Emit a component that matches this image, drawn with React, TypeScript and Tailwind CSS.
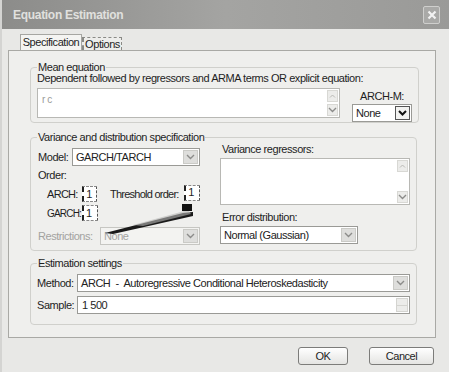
import React from 'react';

const Chevron = ({ dark = false }: { dark?: boolean }) => (
  <svg width="9" height="6" viewBox="0 0 9 6">
    <path d="M1 1l3.5 3.5L8 1" fill="none" stroke={dark ? '#111' : '#8c8c8a'} strokeWidth={dark ? 2 : 1.4} />
  </svg>
);

const Select = ({ value, className = '', disabled = false, dark = false }: { value: string; className?: string; disabled?: boolean; dark?: boolean }) => (
  <div
    className={`flex items-center h-[18px] border ${
      disabled ? 'border-[#c6c6c2] bg-[#f3f3f1] text-[#a4a4a2]' : 'border-[#9a9a96] bg-white text-[#222]'
    } ${className}`}
  >
    <span className="flex-1 pl-[3px] whitespace-pre overflow-hidden leading-[16px]">{value}</span>
    <span
      className={`w-[15px] h-[14px] mr-[1px] flex items-center justify-center ${
        dark ? 'bg-[#f2f2f0] border border-[#555]' : 'bg-[#dededc] border border-[#cacac6]'
      }`}
    >
      <Chevron dark={dark} />
    </span>
  </div>
);

const ScrollBar = () => (
  <div className="w-[11px] h-full flex flex-col justify-between py-[1px] mr-[1px]">
    <div className="h-[12px] bg-[#ececea] border border-[#d8d8d4] flex items-center justify-center">
      <svg width="7" height="4" viewBox="0 0 7 4"><path d="M1 3.5l2.5-2.5L6 3.5" fill="none" stroke="#b8b8b4" /></svg>
    </div>
    <div className="h-[12px] bg-[#ececea] border border-[#d8d8d4] flex items-center justify-center">
      <Chevron />
    </div>
  </div>
);

const Box = ({ className = '' }: { className?: string }) => (
  <div className={`h-[16px] bg-white border-l-2 border-l-[#222] border-y border-y-[#888] border-r border-r-[#555] border-dashed flex items-center pl-[2px] ${className}`}>
    1
  </div>
);

export default function App() {
  return (
    <div className="w-[449px] h-[379px] bg-white overflow-hidden relative text-[11px] tracking-[-0.45px] text-[#1e1e1e] font-['Liberation_Sans',Arial,sans-serif]">
      <div className="h-[372px] bg-[#e8e8e6] border-l-2 border-[#d4d4d2] flex flex-col">
        {/* title bar */}
        <div className="h-[29px] flex items-center justify-between pl-[11px] pr-[9px] bg-gradient-to-r from-[#8c8c8a] via-[#a4a4a2] to-[#9a9a98]">
          <span className="text-[12px] font-bold text-[#e0e0de] tracking-[-0.3px]">Equation Estimation</span>
          <div className="w-[17px] h-[18px] rounded-[2px] border border-[#cfcfcd] bg-[#a9a9a7] flex items-center justify-center">
            <svg width="10" height="10" viewBox="0 0 10 10">
              <path d="M1.5 1.5l7 7M8.5 1.5l-7 7" stroke="#f2f2f2" strokeWidth="2.2" />
            </svg>
          </div>
        </div>

        <div className="pl-[6px]">
          {/* tabs */}
          <div className="h-[21px] flex items-end pl-[12px]">
            <div className="w-[62px] h-[16px] border border-b-0 border-[#a6a6a2] bg-[#f4f4f2] flex items-center justify-center leading-none">
              Specification
            </div>
            <div className="w-[40px] h-[13px] border border-b-0 border-l-2 border-[#8a8a86] border-dashed bg-[#ededeb] flex items-center justify-center leading-none">
              Options
            </div>
          </div>

          {/* panel */}
          <div className="w-[428px] h-[288px] border border-[#a9a9a5] bg-[#efefed] pt-[10px] pl-[21px] relative">
            {/* Mean equation */}
            <fieldset className="w-[387px] h-[62px] border border-[#d0d0cc] rounded-[4px] px-[6px]">
              <legend className="px-[1px] leading-[13px]">Mean equation</legend>
              <div className="leading-[12px] -mt-[2px] whitespace-nowrap">
                Dependent followed by regressors and ARMA terms OR explicit equation:
              </div>
              <div className="flex mt-[4px]">
                <div className="w-[303px] h-[30px] bg-white border border-[#b8b8b4] flex">
                  <span className="flex-1 pl-[4px] pt-[3px] text-[#9a9a98] text-[10px]">r c</span>
                  <ScrollBar />
                </div>
                <div className="ml-[12px] w-[60px] flex flex-col">
                  <div className="text-center leading-[12px] mt-[2px]">ARCH-M:</div>
                  <Select value="None" className="mt-[2px]" dark />
                </div>
              </div>
            </fieldset>

            {/* Variance and distribution */}
            <fieldset className="mt-[8px] w-[387px] h-[120px] border border-[#d0d0cc] rounded-[4px] px-[6px]">
              <legend className="px-[1px] leading-[13px]">Variance and distribution specification</legend>
              <div className="flex">
                <div className="w-[163px]">
                  <div className="flex items-center mt-[4px]">
                    <span className="w-[35px] pl-[1px]">Model:</span>
                    <Select value="GARCH/TARCH" className="w-[128px]" />
                  </div>
                  <div className="mt-[3px] leading-[12px] pl-[1px]">Order:</div>
                  <div className="flex items-center mt-[5px] h-[16px] pl-[10px]">
                    <span className="w-[36px] tracking-[-0.7px]">ARCH:</span>
                    <Box className="w-[15px]" />
                    <span className="ml-[13px] w-[76px] whitespace-nowrap tracking-[-0.75px]">Threshold order:</span>
                    <Box className="w-[16px] -mt-[3px]" />
                  </div>
                  <div className="flex items-center mt-[3px] h-[16px] pl-[10px]">
                    <span className="w-[35px] text-[10px] tracking-[-0.8px]">GARCH:</span>
                    <Box className="w-[16px]" />
                  </div>
                  <div className="flex items-center mt-[6px]">
                    <span className="w-[63px] pl-[1px] text-[#a2a2a0]">Restrictions:</span>
                    <Select value="None" className="w-[100px]" disabled />
                  </div>
                </div>
                <div className="ml-[20px] w-[190px]">
                  <div className="-mt-[1px] leading-[12px] pl-[2px]">Variance regressors:</div>
                  <div className="mt-[3px] h-[47px] bg-white border border-[#b8b8b4] flex justify-end">
                    <ScrollBar />
                  </div>
                  <div className="mt-[6px] leading-[12px] pl-[2px]">Error distribution:</div>
                  <Select value="Normal (Gaussian)" className="mt-[3px] w-[138px]" />
                </div>
              </div>
            </fieldset>

            {/* Estimation settings */}
            <fieldset className="mt-[6px] w-[387px] h-[68px] border border-[#d0d0cc] rounded-[4px] px-[6px]">
              <legend className="px-[1px] leading-[13px]">Estimation settings</legend>
              <div className="flex items-center mt-[4px]">
                <span className="w-[40px]">Method:</span>
                <Select value="ARCH  -  Autoregressive Conditional Heteroskedasticity" className="w-[333px]" />
              </div>
              <div className="flex items-center mt-[4px]">
                <span className="w-[40px]">Sample:</span>
                <div className="w-[333px] h-[18px] bg-white border border-[#9a9a96] flex items-center">
                  <span className="flex-1 pl-[4px]">1 500</span>
                  <div className="w-[12px] h-[14px] mr-[1px] flex flex-col border border-[#d4d4d0] bg-[#ececea]">
                    <div className="flex-1 border-b border-[#d4d4d0]" />
                    <div className="flex-1" />
                  </div>
                </div>
              </div>
            </fieldset>

            {/* scan smudge over the order boxes */}
            <svg className="absolute left-[92px] top-[144px]" width="100" height="40" viewBox="0 0 100 40">
              <polygon points="4,38 82,18 92,17 92,21 12,39" fill="#1a1a1a" />
              <polygon points="32,30 87,15 90,19 42,31" fill="#b8b8b6" opacity="0.6" />
              <rect x="81" y="9" width="10" height="7" fill="#111" />
            </svg>
          </div>

          {/* buttons */}
          <div className="flex mt-[9px]">
            <button className="ml-[290px] w-[50px] h-[18px] rounded-[3px] border border-[#7c7c7a] bg-gradient-to-b from-white to-[#e4e4e2] leading-none">
              OK
            </button>
            <button className="ml-[21px] w-[65px] h-[18px] rounded-[3px] border border-[#7c7c7a] bg-gradient-to-b from-white to-[#e4e4e2] leading-none">
              Cancel
            </button>
          </div>
        </div>
      </div>
    </div>
  );
}
